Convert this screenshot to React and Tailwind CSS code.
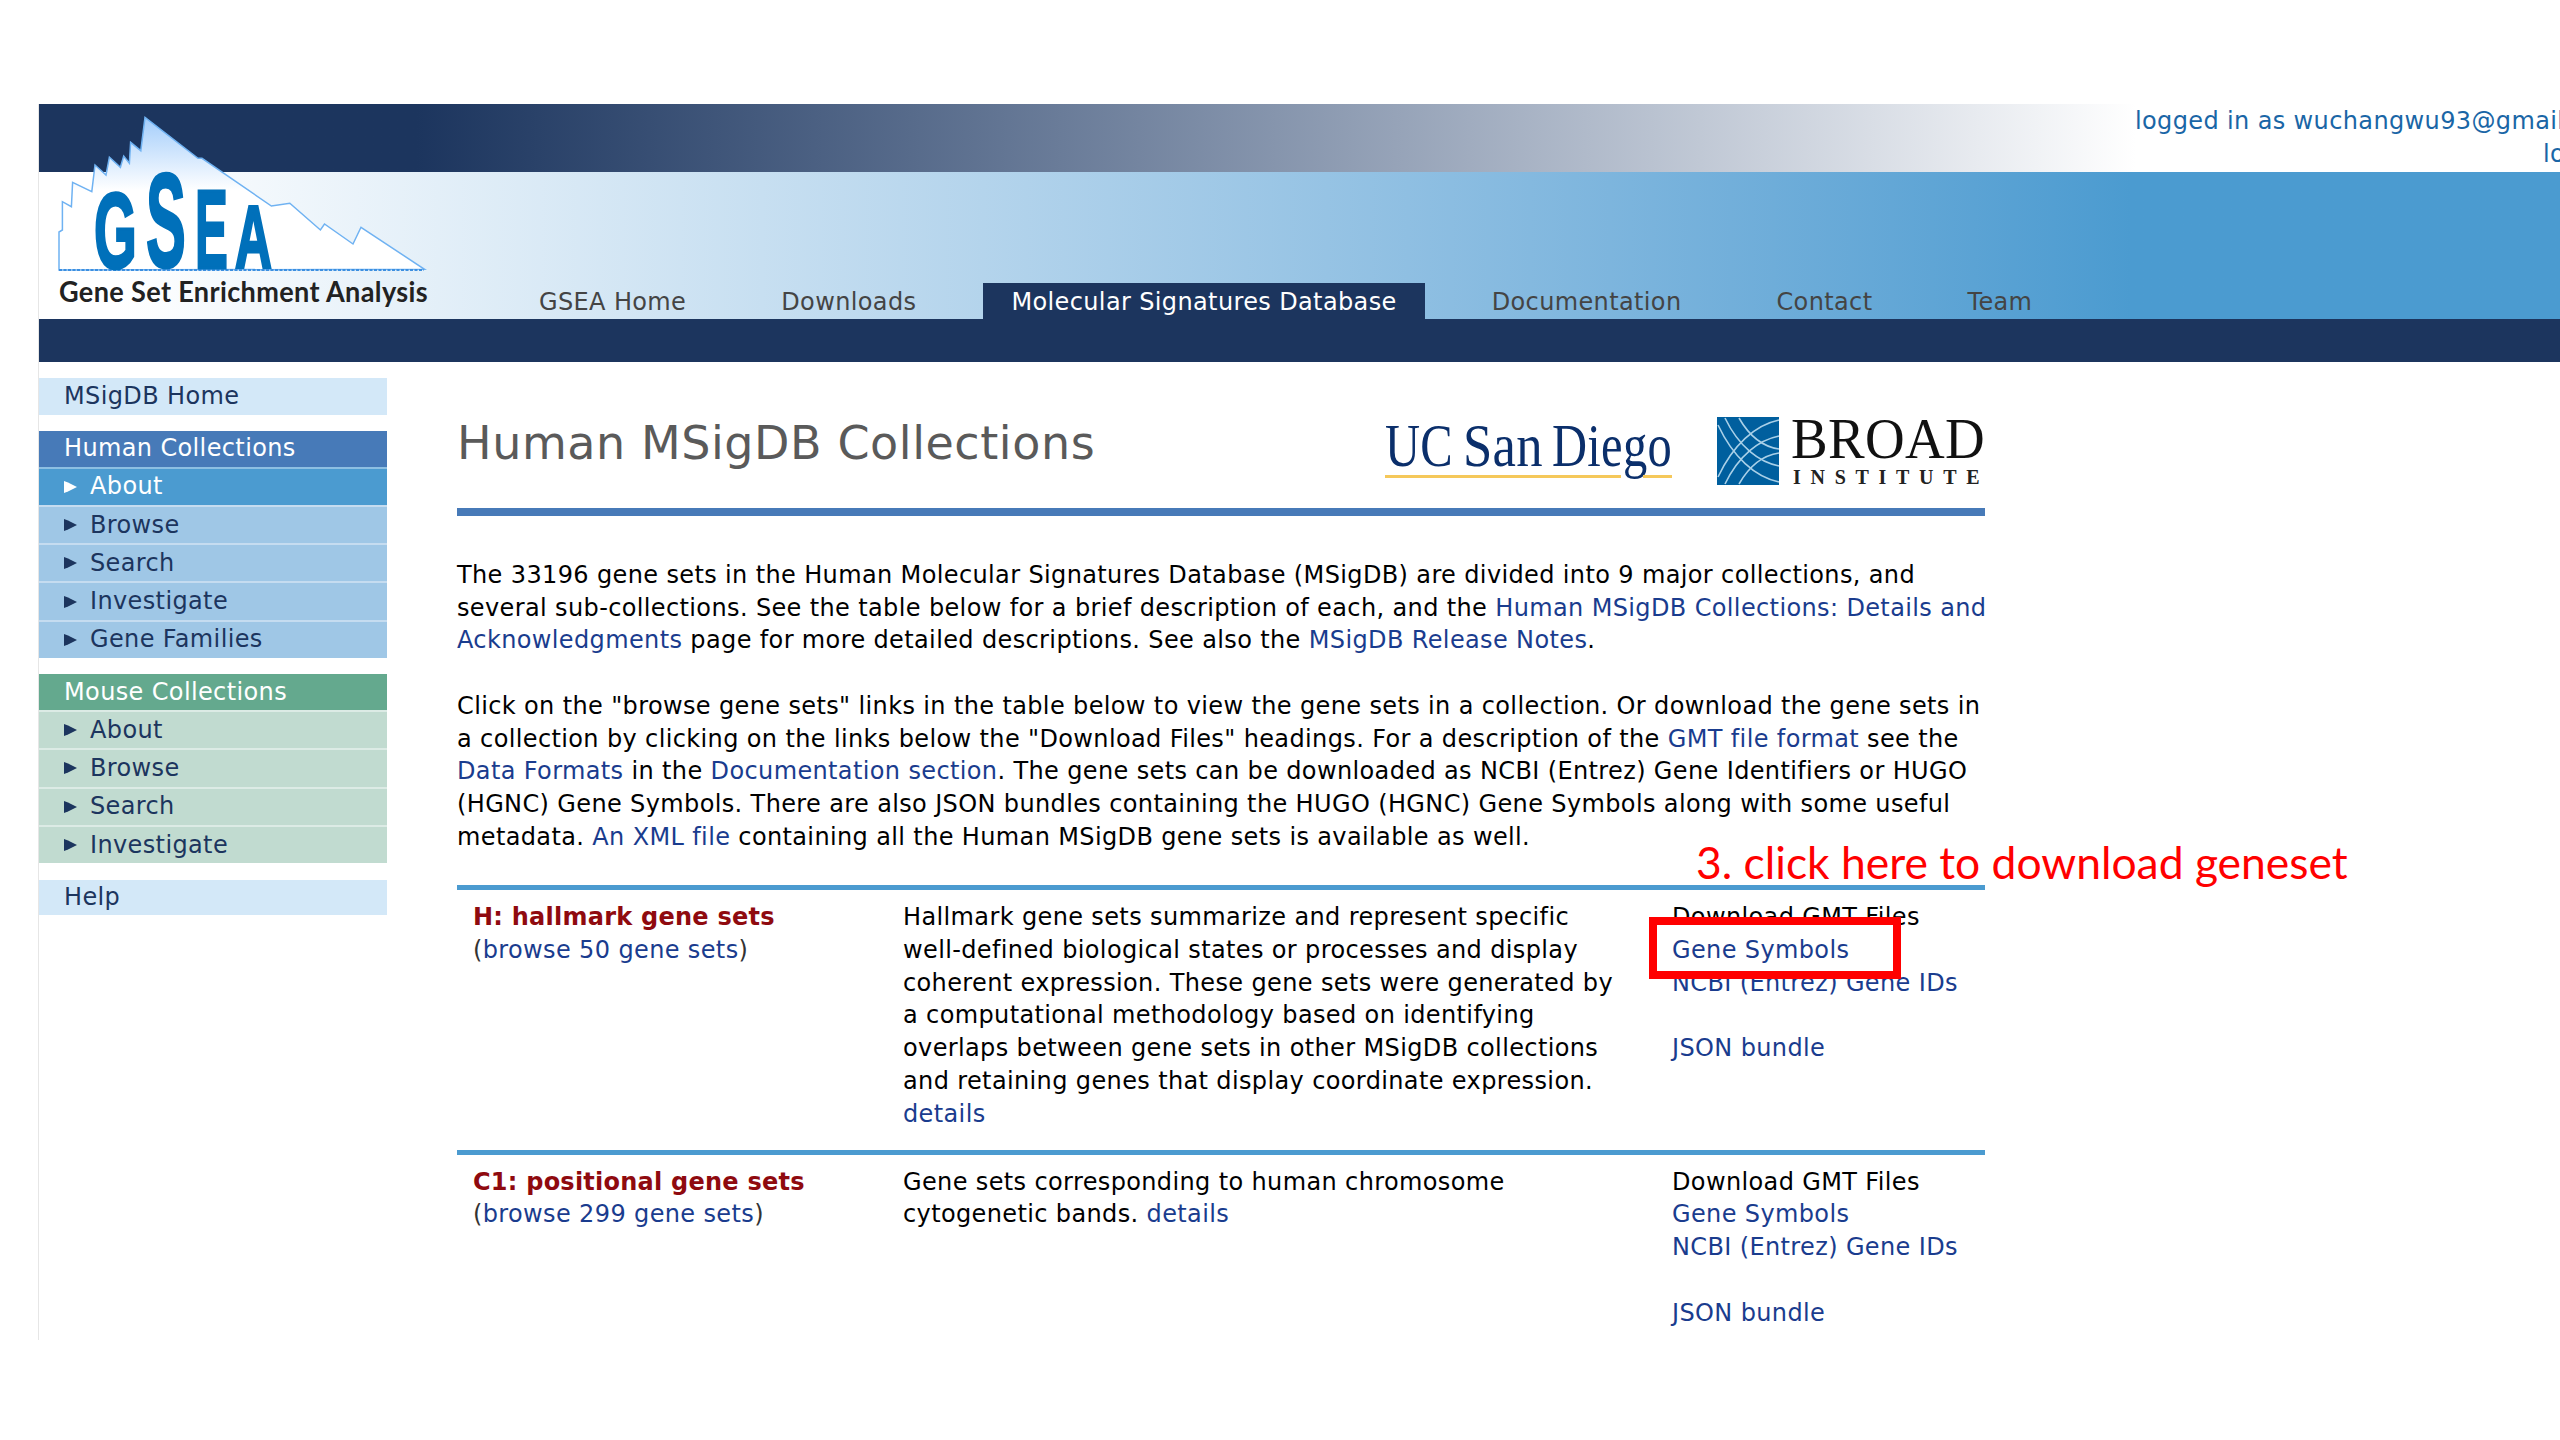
import React from "react";

const sans = "font-['DejaVu_Sans',sans-serif]";

function GseaLogo() {
  return (
    <svg className="absolute left-0 top-0" width="400" height="215" viewBox="0 0 400 215">
      <defs>
        <linearGradient id="peak" x1="0" y1="0" x2="0" y2="1">
          <stop offset="0" stopColor="#a3cdfb" />
          <stop offset="0.48" stopColor="#ffffff" />
          <stop offset="1" stopColor="#ffffff" />
        </linearGradient>
      </defs>
      <path
        d="M20 166 L20 128 L23.4 126 L23.4 97.7 L32.4 102.7 L33.6 78.3 L52.8 87.7 L56 61 L67 71 L70.4 53.3 L81.4 63.3 L84.7 52 L90.4 59.3 L91.6 38.3 L101.8 46.7 L106 13.3 L159 54.3 L163 54.3 L232.4 102 L250.8 99.3 L281.4 126 L285.5 120 L314 140 L322 123.3 L385.5 165.3 Z"
        fill="url(#peak)"
        stroke="#6fb2f2"
        strokeWidth="1.5"
      />
      <line x1="20" y1="166" x2="385" y2="166" stroke="#3d8fe0" strokeWidth="2" strokeDasharray="3 1.5" />
      <g fill="#0070ba" stroke="#0070ba" strokeWidth="3" fontFamily="'Liberation Sans',sans-serif" fontWeight="700">
        <text x="55" y="164" fontSize="108" textLength="43" lengthAdjust="spacingAndGlyphs">G</text>
        <text x="107" y="163" fontSize="134" textLength="40" lengthAdjust="spacingAndGlyphs">S</text>
        <text x="156" y="164" fontSize="112" textLength="33" lengthAdjust="spacingAndGlyphs">E</text>
        <text x="196" y="164" fontSize="89" textLength="37" lengthAdjust="spacingAndGlyphs">A</text>
      </g>
      <text
        x="20"
        y="198"
        fill="#222222"
        fontFamily="'Lato',sans-serif"
        fontWeight="700"
        fontSize="28"
        textLength="369"
        lengthAdjust="spacingAndGlyphs"
      >
        Gene Set Enrichment Analysis
      </text>
    </svg>
  );
}

function UcsdLogo() {
  return (
    <svg width="288" height="62" viewBox="0 0 288 62">
      <g fill="#0b2f6b" fontFamily="'Liberation Serif',serif" fontSize="62">
        <text x="0" y="49" textLength="68" lengthAdjust="spacingAndGlyphs">UC</text>
        <text x="78" y="49" textLength="80" lengthAdjust="spacingAndGlyphs">San</text>
        <text x="167" y="49" textLength="120" lengthAdjust="spacingAndGlyphs">Diego</text>
      </g>
      <rect x="0" y="58" width="236" height="3" fill="#f5c85a" />
      <rect x="258" y="58" width="29" height="3" fill="#f5c85a" />
    </svg>
  );
}

function BroadLogo() {
  return (
    <svg width="268" height="68" viewBox="0 0 268 68">
      <rect x="0" y="0" width="62" height="68" fill="#005f9e" />
      <g fill="none" stroke="#a9d0e8" strokeWidth="1.6">
        <path d="M62 3 C38 8 16 28 1 60" />
        <path d="M62 19 C42 23 22 38 8 67" />
        <path d="M62 36 C48 38 34 46 22 67" />
        <path d="M62 65 C38 60 16 40 1 8" />
        <path d="M62 49 C42 45 22 30 8 1" />
        <path d="M62 32 C48 30 34 22 22 1" />
      </g>
      <text
        x="74"
        y="41"
        fill="#111111"
        fontFamily="'Liberation Serif',serif"
        fontSize="58"
        textLength="194"
        lengthAdjust="spacingAndGlyphs"
      >
        BROAD
      </text>
      <text
        x="76"
        y="67"
        fill="#222222"
        fontFamily="'Liberation Serif',serif"
        fontWeight="700"
        fontSize="20"
        textLength="187"
        lengthAdjust="spacing"
      >
        INSTITUTE
      </text>
    </svg>
  );
}

function Arrow({ className }) {
  return (
    <svg className={className} width="13" height="12" viewBox="0 0 13 12">
      <path d="M0 0 L4 1.5 L13 6 L4 10.5 L0 12 Z" fill="currentColor" />
    </svg>
  );
}

function SideItem({ label, bg, active }) {
  return (
    <div
      className={`flex items-center h-[38.3px] border-t-2 pl-[25px] ${bg} ${
        active ? "text-white" : "text-[#1c355e]"
      }`}
    >
      <Arrow className={active ? "text-white" : "text-[#1c355e]"} />
      <span className="ml-[13px]">{label}</span>
    </div>
  );
}

function Sidebar() {
  return (
    <div className="w-[348px] shrink-0 pt-[16px] text-[#1c355e]">
      <div className="flex items-center h-[36.5px] pl-[25px] bg-[#d3e8f8]">MSigDB Home</div>

      <div className="flex items-center h-[35.5px] pl-[25px] mt-[16.5px] bg-[#477ab8] text-white">
        Human Collections
      </div>
      <SideItem label="About" bg="bg-[#4b9bd0] border-[#8dbfe2]" active />
      <SideItem label="Browse" bg="bg-[#9fc7e6] border-[#c5dcf0]" />
      <SideItem label="Search" bg="bg-[#9fc7e6] border-[#c5dcf0]" />
      <SideItem label="Investigate" bg="bg-[#9fc7e6] border-[#c5dcf0]" />
      <SideItem label="Gene Families" bg="bg-[#9fc7e6] border-[#c5dcf0]" />

      <div className="flex items-center h-[36px] pl-[25px] mt-[16px] bg-[#64a98e] text-white">
        Mouse Collections
      </div>
      <SideItem label="About" bg="bg-[#c1dbd0] border-[#dcebe5]" />
      <SideItem label="Browse" bg="bg-[#c1dbd0] border-[#dcebe5]" />
      <SideItem label="Search" bg="bg-[#c1dbd0] border-[#dcebe5]" />
      <SideItem label="Investigate" bg="bg-[#c1dbd0] border-[#dcebe5]" />

      <div className="flex items-center h-[35px] pl-[25px] mt-[16.5px] bg-[#d3e8f8]">Help</div>
    </div>
  );
}

function A({ children }) {
  return <a className="text-[#1a3c8e]">{children}</a>;
}

function Downloads() {
  return (
    <div>
      Download GMT Files
      <br />
      <A>Gene Symbols</A>
      <br />
      <A>NCBI (Entrez) Gene IDs</A>
      <br />
      <br />
      <A>JSON bundle</A>
    </div>
  );
}

function Content() {
  return (
    <div className="w-[1528px] ml-[70px] pt-[55px] text-black whitespace-nowrap">
      <div className="flex justify-between h-[91px]">
        <div className="text-[#5a5a5a] text-[46px] leading-[52px] tracking-[0.57px]">Human MSigDB Collections</div>
        <div className="flex gap-[44px]">
          <UcsdLogo />
          <BroadLogo />
        </div>
      </div>
      <div className="h-[8px] bg-[#477ab8]" />

      <p className="mt-[43px]">
        The 33196 gene sets in the Human Molecular Signatures Database (MSigDB) are divided into 9 major collections, and
        <br />
        several sub-collections. See the table below for a brief description of each, and the{" "}
        <A>Human MSigDB Collections: Details and</A>
        <br />
        <A>Acknowledgments</A> page for more detailed descriptions. See also the <A>MSigDB Release Notes</A>.
      </p>

      <p className="mt-[32.7px]">
        Click on the "browse gene sets" links in the table below to view the gene sets in a collection. Or download the gene sets in
        <br />
        a collection by clicking on the links below the "Download Files" headings. For a description of the{" "}
        <A>GMT file format</A> see the
        <br />
        <A>Data Formats</A> in the <A>Documentation section</A>. The gene sets can be downloaded as NCBI (Entrez) Gene Identifiers or HUGO
        <br />
        (HGNC) Gene Symbols. There are also JSON bundles containing the HUGO (HGNC) Gene Symbols along with some useful
        <br />
        metadata. <A>An XML file</A> containing all the Human MSigDB gene sets is available as well.
      </p>

      <div className="mt-[32px] border-t-[5px] border-[#4b9bd0] grid grid-cols-[430px_769px_1fr] pl-[16px] pt-[11px] pb-[19.5px]">
        <div>
          <div className="font-bold text-[#8f0a0f] tracking-[0.24px]">H: hallmark gene sets</div>
          <div className="text-[#333]">
            (<A>browse 50 gene sets</A>)
          </div>
        </div>
        <div>
          Hallmark gene sets summarize and represent specific
          <br />
          well-defined biological states or processes and display
          <br />
          coherent expression. These gene sets were generated by
          <br />
          a computational methodology based on identifying
          <br />
          overlaps between gene sets in other MSigDB collections
          <br />
          and retaining genes that display coordinate expression.
          <br />
          <A>details</A>
        </div>
        <Downloads />
      </div>

      <div className="border-t-[5px] border-[#4b9bd0] grid grid-cols-[430px_769px_1fr] pl-[16px] pt-[11px]">
        <div>
          <div className="font-bold text-[#8f0a0f] tracking-[0.24px]">C1: positional gene sets</div>
          <div className="text-[#333]">
            (<A>browse 299 gene sets</A>)
          </div>
        </div>
        <div>
          Gene sets corresponding to human chromosome
          <br />
          cytogenetic bands. <A>details</A>
        </div>
        <Downloads />
      </div>
    </div>
  );
}

const navItems = ["GSEA Home", "Downloads", "Molecular Signatures Database", "Documentation", "Contact", "Team"];

function Header() {
  return (
    <div className="relative">
      <div className="relative h-[68px] bg-white">
        <div className="absolute left-0 top-0 h-full w-[2097px] bg-linear-to-r from-[#1c355e] from-[18%] to-white" />
        <div className="relative ml-[2096px] w-[486px] text-right text-[#1a66a6] whitespace-nowrap pt-[1px]">
          logged in as wuchangwu93@gmail.com
          <br />
          logout
        </div>
      </div>
      <div className="flex items-end h-[147px] pl-[472px] gap-[39px] bg-linear-to-r from-white from-[3%] to-[#4b9bd0] to-[83%] text-[#444444]">
        {navItems.map((item) => (
          <div
            key={item}
            className={`h-[36px] px-[28px] pt-[2px] flex items-center whitespace-nowrap ${
              item === "Molecular Signatures Database" ? "bg-[#1c355e] text-white" : ""
            }`}
          >
            {item}
          </div>
        ))}
      </div>
      <div className="h-[43px] bg-[#1c355e]" />
      <GseaLogo />
    </div>
  );
}

export default function App() {
  return (
    <div className={`relative w-[2560px] h-[1440px] overflow-hidden bg-white text-[24px] leading-[32.7px] tracking-[0.37px] ${sans}`}>
      <div className="mt-[104px] ml-[38px] h-[1236px] w-[2522px] overflow-hidden border-l border-[#e6e6e6]">
        <Header />
        <div className="flex">
          <Sidebar />
          <Content />
        </div>
      </div>

      {/* annotation pasted on top of the page */}
      <div className="absolute left-[1696px] top-[835px] text-[44.4px] leading-[54px] tracking-normal text-[#ff0000] whitespace-nowrap font-['Lato',sans-serif]">
        3. click here to download geneset
      </div>
      <div className="absolute left-[1649px] top-[917px] w-[252px] h-[62px] border-[8px] border-[#ff0000]" />
    </div>
  );
}
